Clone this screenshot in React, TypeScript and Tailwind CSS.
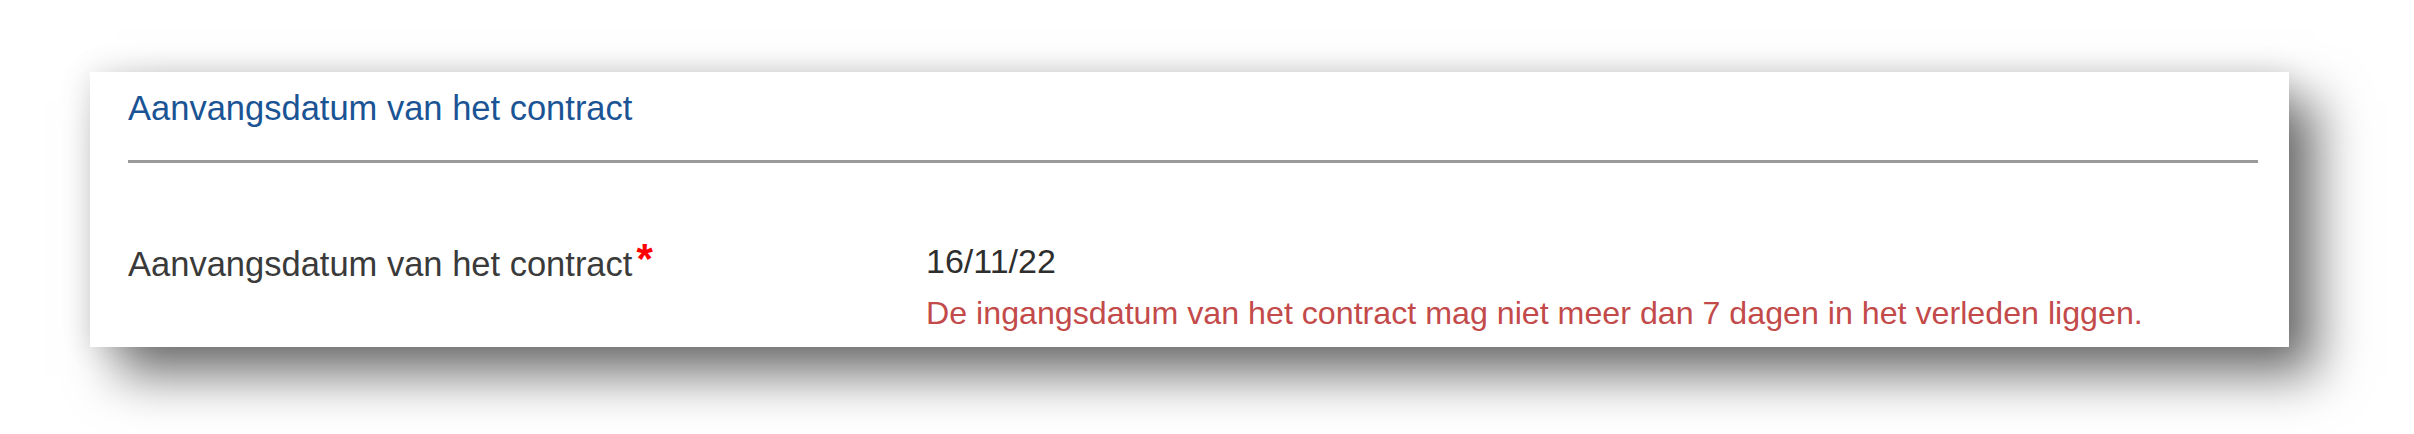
export default function App() {
  return (
    <div className="min-h-[434px] w-[2414px] bg-white pt-[72px] pl-[90px] font-['Liberation_Sans',Arial,sans-serif]">
      <div className="w-[2199px] h-[275px] bg-white pl-[38px] pr-[31px] pt-[16px] shadow-[0_0_28px_rgba(0,0,0,0.12),28px_28px_48px_rgba(0,0,0,0.55)]">
        <h2 className="text-[34.5px] leading-[40px] text-[#1b5494]">
          Aanvangsdatum van het contract
        </h2>
        <div className="mt-[32px] h-[3px] bg-[#9a9a9a]" />
        <div className="mt-[78px] flex">
          <div className="w-[798px] shrink-0 text-[34.5px] leading-[40px] text-[#3a3a3a]">
            Aanvangsdatum van het contract
            <span className="ml-[4px] relative -top-[3px] text-[42px] font-bold leading-none text-[#ff0000]">*</span>
          </div>
          <div>
            <div className="text-[34px] leading-[40px] text-[#2e2e2e]">16/11/22</div>
            <div className="mt-[14px] text-[32.2px] leading-[37px] text-[#c34a4a]">
              De ingangsdatum van het contract mag niet meer dan 7 dagen in het verleden liggen.
            </div>
          </div>
        </div>
      </div>
    </div>
  );
}
